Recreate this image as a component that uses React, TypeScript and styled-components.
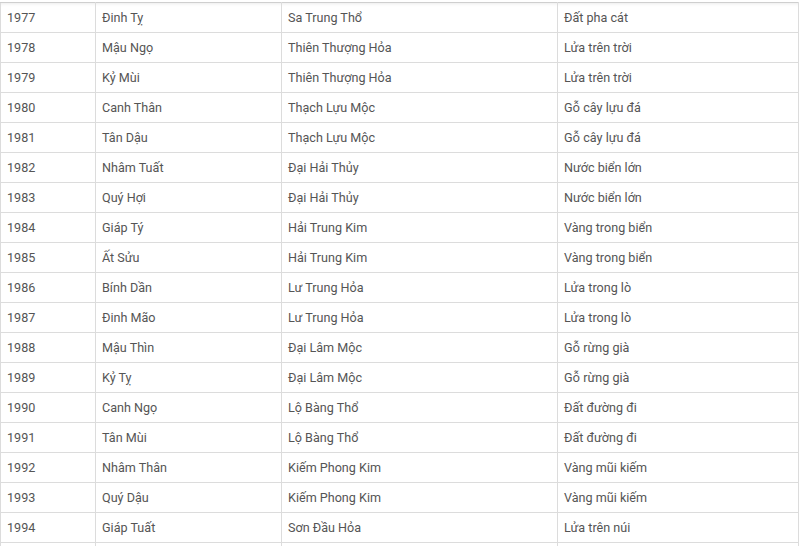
import React from "react";
import styled, { createGlobalStyle } from "styled-components";

const Global = createGlobalStyle`
  html, body { margin: 0; padding: 0; background: #ffffff; }
  body { font-family: Roboto, "Noto Sans", Arial, sans-serif; }
`;

const Wrap = styled.div`
  padding-top: 2px;
  width: 798px;
`;

const Table = styled.table`
  width: 798px;
  border-collapse: collapse;
  table-layout: fixed;
  font-family: Roboto, "Noto Sans", Arial, sans-serif;
  font-size: 12.6px;
  color: #555555;
  box-shadow: inset 0 4px 4px -3px rgba(0, 0, 0, 0.12);
`;

const Col = styled.col<{ $w: number }>`
  width: ${(p) => p.$w}px;
`;

const Row = styled.tr`
  height: 30px;
`;

const Cell = styled.td<{ $first?: boolean }>`
  border: 1px solid #dcdcdc;
  border-top-color: ${(p) => (p.$first ? "#cfcfcf" : "#dcdcdc")};
  padding: 0 6px;
  height: 29px;
  box-sizing: border-box;
  white-space: nowrap;
  vertical-align: middle;
  line-height: 18px;
`;

/* Roboto's hinting drops the stacked tilde of "ỗ" at this size; draw it in Noto Sans */
const Stacked = styled.span`
  font-family: "Noto Sans", "Open Sans", sans-serif;
  font-size: 12.4px;
`;

const renderText = (t: string) => {
  if (!t.includes("ỗ")) return t;
  const parts = t.split("ỗ");
  return parts.map((p, i) => (
    <React.Fragment key={i}>
      {p}
      {i < parts.length - 1 && <Stacked>ỗ</Stacked>}
    </React.Fragment>
  ));
};

const rows: [string, string, string, string][] = [
  ["1977", "Đinh Tỵ", "Sa Trung Thổ", "Đất pha cát"],
  ["1978", "Mậu Ngọ", "Thiên Thượng Hỏa", "Lửa trên trời"],
  ["1979", "Kỷ Mùi", "Thiên Thượng Hỏa", "Lửa trên trời"],
  ["1980", "Canh Thân", "Thạch Lựu Mộc", "Gỗ cây lựu đá"],
  ["1981", "Tân Dậu", "Thạch Lựu Mộc", "Gỗ cây lựu đá"],
  ["1982", "Nhâm Tuất", "Đại Hải Thủy", "Nước biển lớn"],
  ["1983", "Quý Hợi", "Đại Hải Thủy", "Nước biển lớn"],
  ["1984", "Giáp Tý", "Hải Trung Kim", "Vàng trong biển"],
  ["1985", "Ất Sửu", "Hải Trung Kim", "Vàng trong biển"],
  ["1986", "Bính Dần", "Lư Trung Hỏa", "Lửa trong lò"],
  ["1987", "Đinh Mão", "Lư Trung Hỏa", "Lửa trong lò"],
  ["1988", "Mậu Thìn", "Đại Lâm Mộc", "Gỗ rừng già"],
  ["1989", "Kỷ Tỵ", "Đại Lâm Mộc", "Gỗ rừng già"],
  ["1990", "Canh Ngọ", "Lộ Bàng Thổ", "Đất đường đi"],
  ["1991", "Tân Mùi", "Lộ Bàng Thổ", "Đất đường đi"],
  ["1992", "Nhâm Thân", "Kiếm Phong Kim", "Vàng mũi kiếm"],
  ["1993", "Quý Dậu", "Kiếm Phong Kim", "Vàng mũi kiếm"],
  ["1994", "Giáp Tuất", "Sơn Đầu Hỏa", "Lửa trên núi"],
  ["1995", "Ất Hợi", "Sơn Đầu Hỏa", "Lửa trên núi"],
];

export default function App() {
  return (
    <>
      <Global />
      <Wrap>
        <Table>
          <colgroup>
            <Col $w={95} />
            <Col $w={186} />
            <Col $w={276} />
            <Col $w={241} />
          </colgroup>
          <tbody>
            {rows.map((r, ri) => (
              <Row key={r[0]}>
                {r.map((c, i) => (
                  <Cell key={i} $first={ri === 0}>
                    {renderText(c)}
                  </Cell>
                ))}
              </Row>
            ))}
          </tbody>
        </Table>
      </Wrap>
    </>
  );
}
